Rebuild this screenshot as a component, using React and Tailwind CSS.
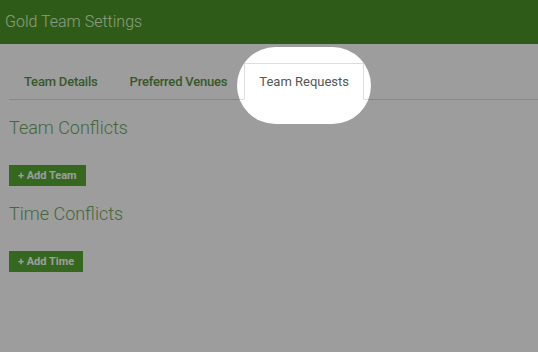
import React from "react";

const tabs = [
  { id: "details", label: "Team Details" },
  { id: "venues", label: "Preferred Venues" },
  { id: "requests", label: "Team Requests" },
];

const sections = [
  { title: "Team Conflicts", button: "+ Add Team" },
  { title: "Time Conflicts", button: "+ Add Time" },
];

export default function App() {
  const active = "requests";

  return (
    <div
      className="relative h-[352px] w-full overflow-hidden bg-white"
      style={{ fontFamily: "Roboto, 'Liberation Sans', sans-serif" }}
    >
      {/* header */}
      <div className="flex h-[44px] items-center bg-[#4c9426] px-[5px]">
        <h1 className="text-[16px] font-light text-[#e0ffd0]">Gold Team Settings</h1>
      </div>

      {/* tabs */}
      <ul className="ml-[9px] mt-[19px] flex border-b border-[#dddddd]">
        {tabs.map((tab) => (
          <li key={tab.id} className="-mb-px mr-[2px]">
            <button
              className={`block border px-[14px] py-[10px] text-[13px] leading-[15px] ${
                tab.id === active
                  ? "border-[#dddddd] border-b-white bg-white text-[#555555]"
                  : "border-transparent font-medium tracking-[-0.2px] text-[#5a9145]"
              }`}
            >
              {tab.label}
            </button>
          </li>
        ))}
      </ul>

      {/* tab content */}
      <div className="px-[9px]">
        {sections.map((s) => (
          <div key={s.title} className="mt-[18px]">
            <h3 className="text-[18px] font-light leading-[20px] text-[#72a862]">{s.title}</h3>
            <button className="mt-[27px] block bg-[#57a832] px-[9px] py-[4px] text-[11px] font-bold leading-[13px] text-white">
              {s.button}
            </button>
          </div>
        ))}
      </div>

      {/* spotlight overlay */}
      <div className="pointer-events-none absolute left-[237px] top-[47px] h-[77px] w-[134px] rounded-full shadow-[0_0_0_2000px_rgba(0,0,0,0.385)]" />
    </div>
  );
}
